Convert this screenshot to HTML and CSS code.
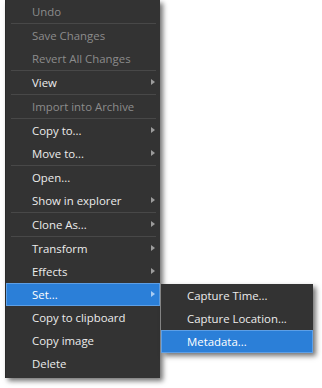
FILE: index.html
```html
<!DOCTYPE html>
<html lang="en">
<head>
  <meta charset="UTF-8" />
  <title>Context Menu</title>
  <link rel="stylesheet" href="styles.css">
</head>
<body>
  <div class="menu-wrap">
    <ul class="menu">
      <li class="item disabled">Undo</li>
      <li class="sep"></li>
      <li class="item disabled">Save Changes</li>
      <li class="item disabled">Revert All Changes</li>
      <li class="sep"></li>
      <li class="item sub">View</li>
      <li class="sep"></li>
      <li class="item disabled">Import into Archive</li>
      <li class="sep"></li>
      <li class="item sub">Copy to...</li>
      <li class="item sub">Move to...</li>
      <li class="sep"></li>
      <li class="item">Open...</li>
      <li class="item sub">Show in explorer</li>
      <li class="sep"></li>
      <li class="item sub">Clone As...</li>
      <li class="sep"></li>
      <li class="item sub">Transform</li>
      <li class="item sub">Effects</li>
      <li class="item sub active">Set...</li>
      <li class="item">Copy to clipboard</li>
      <li class="item">Copy image</li>
      <li class="item">Delete</li>
    </ul>

    <ul class="menu submenu">
      <li class="item">Capture Time...</li>
      <li class="item">Capture Location...</li>
      <li class="item active">Metadata...</li>
    </ul>
  </div>
</body>
</html>
```

FILE: styles.css
```css
body {
  margin: 0;
  background: #ffffff;
  font-family: 'Open Sans', 'Noto Sans', sans-serif;
  font-size: 11.4px;
}

.menu-wrap {
  position: relative;
  width: 322px;
  height: 388px;
}

.menu {
  list-style: none;
  margin: 0 0 0 5px;
  padding: 0 0 3px;
  width: 154px;
  background: #333333;
  border-left: 1px solid #2a2a2a;
  box-shadow: 3px 3px 5px rgba(0, 0, 0, 0.55);
}

.item {
  position: relative;
  height: 23px;
  line-height: 23px;
  padding-left: 26px;
  color: #ececec;
  white-space: nowrap;
  box-sizing: border-box;
}

.item.disabled {
  color: #8c8c8c;
}

.item.sub::after {
  content: '';
  position: absolute;
  right: 5px;
  top: 8px;
  border-left: 4px solid #9c9c9c;
  border-top: 3.5px solid transparent;
  border-bottom: 3.5px solid transparent;
}

.item.active {
  background: #2b7fd8;
  border: 1px solid #5d9fe6;
  line-height: 21px;
  padding-left: 25px;
  color: #ffffff;
}

.item.active.sub::after {
  right: 4px;
  top: 7px;
  border-left-color: #a9cdf3;
}

.sep {
  height: 1px;
  margin: 0 4px 0 5px;
  background: #484848;
}

.submenu {
  position: absolute;
  left: 156px;
  top: 284px;
  width: 152px;
  padding: 0;
  border-left: none;
}
```
